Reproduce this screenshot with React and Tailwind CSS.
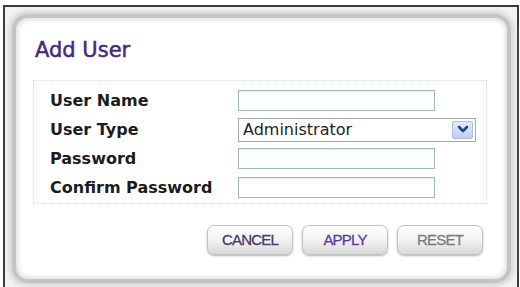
import React from 'react';

const rows = [
  { label: 'User Name', kind: 'text' },
  { label: 'User Type', kind: 'select' },
  { label: 'Password', kind: 'text' },
  { label: 'Confirm Password', kind: 'text' },
];

const Chevron = () => (
  <svg width="12" height="9" viewBox="0 0 12 9">
    <path d="M2 2 L6 6 L10 2" fill="none" stroke="#23478c" strokeWidth="2.6" strokeLinecap="round" strokeLinejoin="round" />
  </svg>
);

const Field = ({ kind }) => {
  if (kind === 'select') {
    return (
      <div className="w-[238px] h-[24px] border border-[#a3a8ad] bg-white flex items-center justify-between pl-[4px] pr-[2px]">
        <span className="text-[16px] text-[#222] leading-none">Administrator</span>
        <div className="w-[21px] h-[18px] border border-[#a9bde0] rounded-[2px] bg-gradient-to-b from-[#e4ecfa] to-[#bfd0ee] flex items-center justify-center">
          <Chevron />
        </div>
      </div>
    );
  }
  return <div className="w-[197px] h-[21px] border border-[#9fb8c6] bg-white shadow-[inset_0_1px_1px_#e2ecf0]" />;
};

const Button = ({ label, color }) => (
  <button
    className="w-[86px] h-[30px] rounded-[7px] border border-[#c2c2c2] bg-gradient-to-b from-white via-[#f2f2f2] to-[#d9d9d9] shadow-[0_1px_2px_rgba(0,0,0,0.3)] text-[15px] tracking-[-0.8px] [-webkit-text-stroke:0.3px]"
    style={{ fontFamily: '"Liberation Sans", Arial, sans-serif', color }}
  >
    {label}
  </button>
);

export default function App() {
  return (
    <div className="w-[520px] h-[287px] bg-white overflow-hidden" style={{ fontFamily: '"DejaVu Sans", Verdana, sans-serif' }}>
      <div className="ml-[3px] mt-[5px] w-[516px] h-[282px] border-2 border-b-0 border-[#3a3a3a] bg-[#f3f3f3] pl-[7px] pt-[7px]">
        <div className="w-[499px] h-[269px] rounded-[16px] border-[4px] border-[#c4c4c4] bg-white shadow-[0_0_5px_3px_#d4d4d4,inset_0_0_5px_2px_#dedede]">
          <h1 className="ml-[19px] mt-[20px] text-[21px] leading-[24px] text-[#47287f] [-webkit-text-stroke:0.5px]">Add User</h1>

          <div className="ml-[17px] mt-[18px] w-[454px] border border-dotted border-[#dadada] pt-[5px] pb-[1px] pl-[16px]">
            {rows.map((row) => (
              <div key={row.label} className="h-[29px] flex items-center">
                <span className="w-[188px] text-[16px] font-bold text-[#1c1c1c] leading-none">{row.label}</span>
                <Field kind={row.kind} />
              </div>
            ))}
          </div>

          <div className="ml-[17px] w-[454px] mt-[21px] pr-[4px] flex justify-end gap-[9px]">
            <Button label="CANCEL" color="#473a6c" />
            <Button label="APPLY" color="#5a3c9f" />
            <Button label="RESET" color="#7c7c7c" />
          </div>
        </div>
      </div>
    </div>
  );
}
